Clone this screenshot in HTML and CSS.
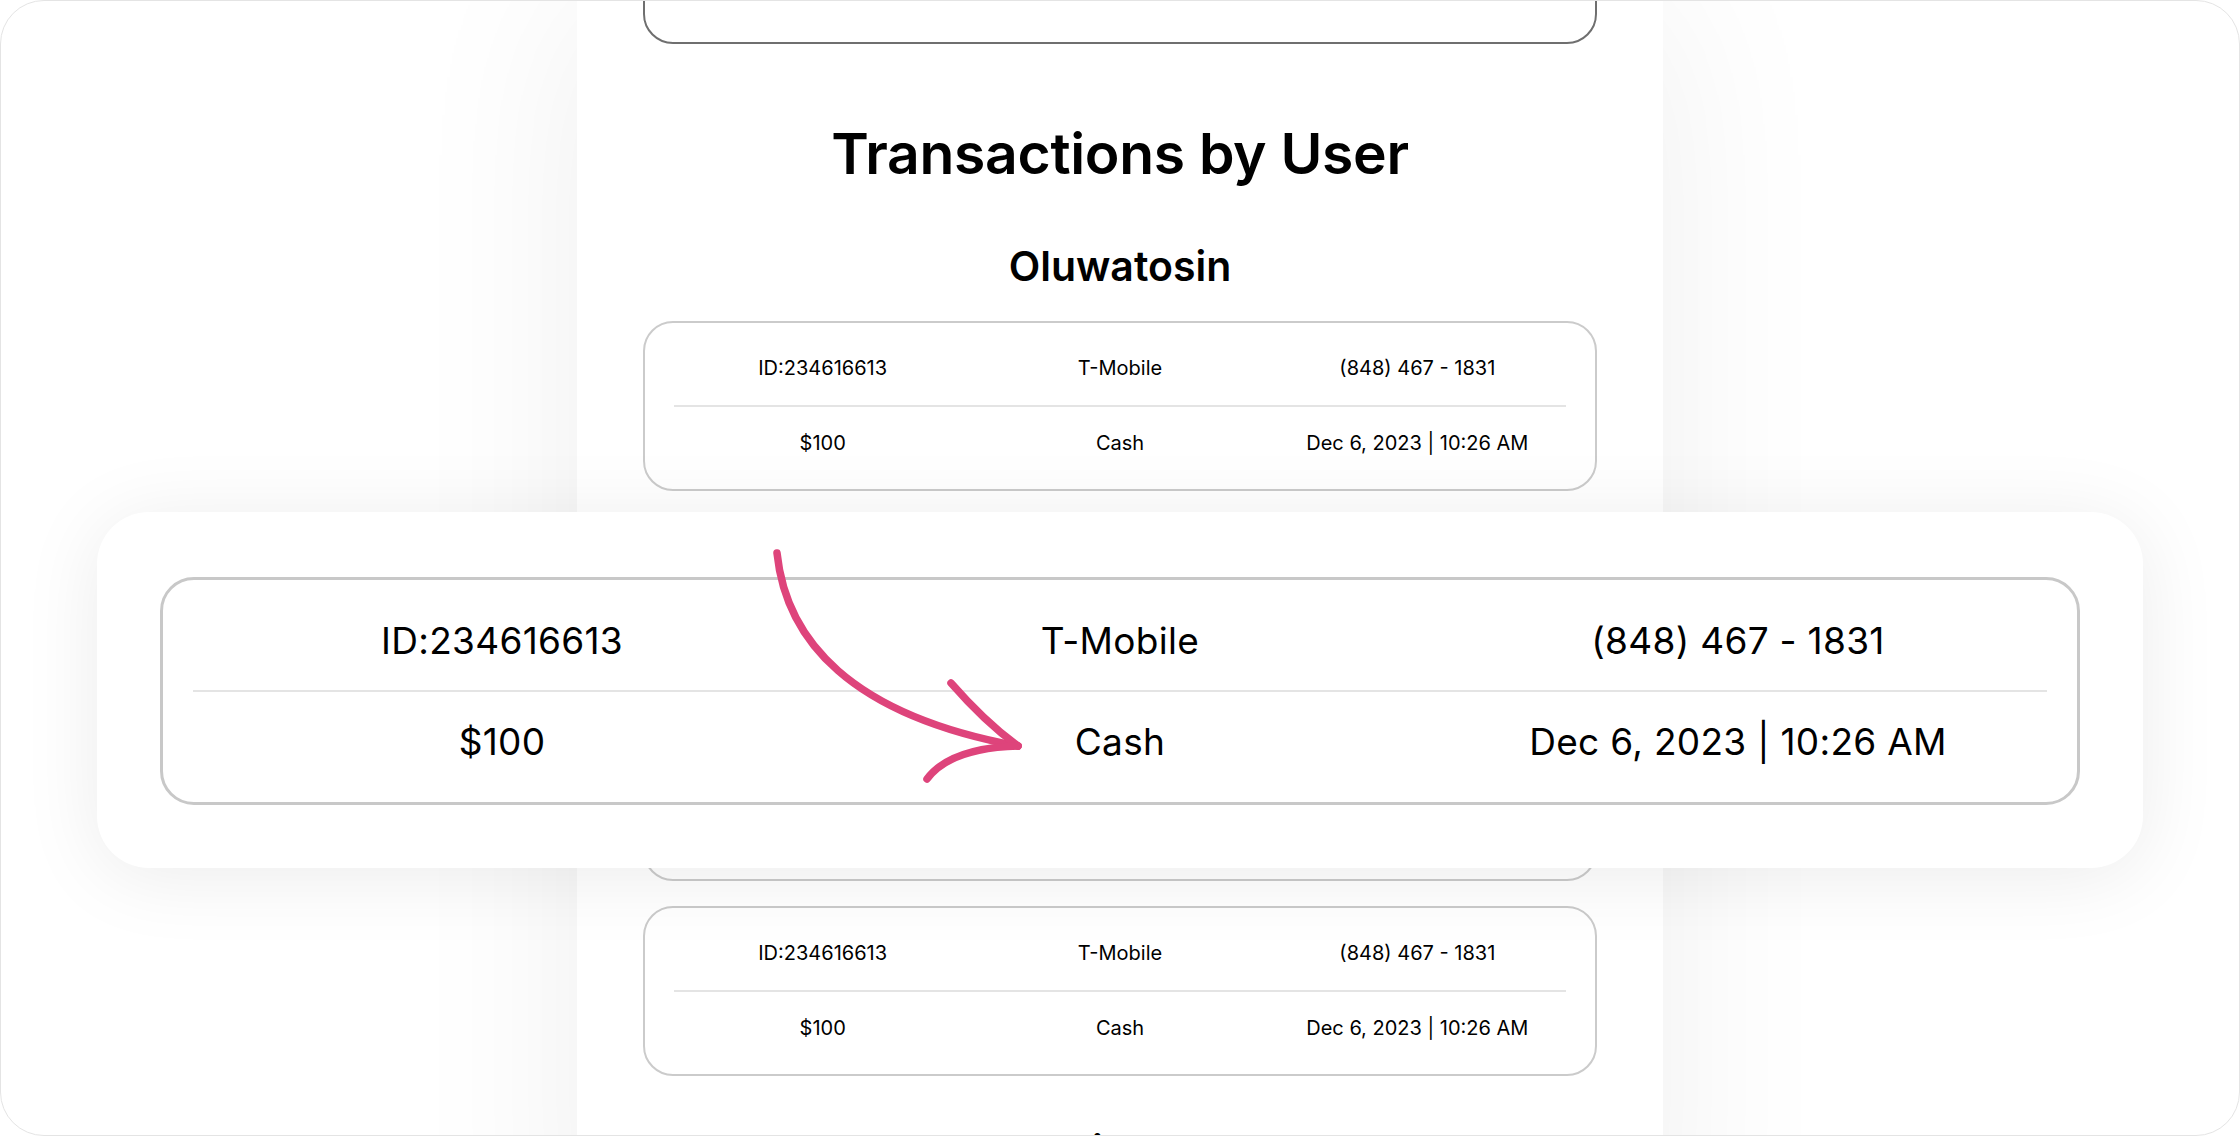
FILE: index.html
```html
<!DOCTYPE html>
<html lang="en">
<head>
<meta charset="utf-8">
<title>Transactions by User</title>
<link rel="stylesheet" href="styles.css">
</head>
<body>
<div class="frame">
  <div class="page">
    <div class="tx tx-dark"></div>
    <h1 class="title">Transactions by User</h1>

    <section class="group">
      <h2 class="user">Oluwatosin</h2>
      <div class="tx">
        <div class="row"><span>ID:234616613</span><span>T-Mobile</span><span>(848) 467 - 1831</span></div>
        <div class="row"><span>$100</span><span>Cash</span><span>Dec 6, 2023 | 10:26 AM</span></div>
      </div>
      <div class="tx">
        <div class="row"><span>ID:234616613</span><span>T-Mobile</span><span>(848) 467 - 1831</span></div>
        <div class="row"><span>$100</span><span>Cash</span><span>Dec 6, 2023 | 10:26 AM</span></div>
      </div>
      <div class="tx">
        <div class="row"><span>ID:234616613</span><span>T-Mobile</span><span>(848) 467 - 1831</span></div>
        <div class="row"><span>$100</span><span>Cash</span><span>Dec 6, 2023 | 10:26 AM</span></div>
      </div>
      <div class="tx">
        <div class="row"><span>ID:234616613</span><span>T-Mobile</span><span>(848) 467 - 1831</span></div>
        <div class="row"><span>$100</span><span>Cash</span><span>Dec 6, 2023 | 10:26 AM</span></div>
      </div>
    </section>

    <section class="group">
      <h2 class="user">Abiodun</h2>
    </section>
  </div>

  <div class="zoom-panel">
    <div class="tx tx-large">
      <div class="row"><span>ID:234616613</span><span>T-Mobile</span><span>(848) 467 - 1831</span></div>
      <div class="row"><span>$100</span><span>Cash</span><span>Dec 6, 2023 | 10:26 AM</span></div>
    </div>
  </div>

  <svg class="arrow" width="2240" height="1136" viewBox="0 0 2240 1136" aria-hidden="true">
    <path d="M777 553 C 786 640, 850 715, 1018 746" />
    <path d="M951 683 Q 985 722, 1018 746" />
    <path d="M1018 746 Q 950 748, 927 779" />
  </svg>
</div>
</body>
</html>
```

FILE: styles.css
```css
* { box-sizing: border-box; }

html, body {
  margin: 0;
  padding: 0;
  background: #ffffff;
}

body {
  font-family: "Inter", "Noto Sans", "Liberation Sans", sans-serif;
  color: #000;
}

.frame {
  position: relative;
  width: 2240px;
  height: 1136px;
  overflow: hidden;
  background: #ffffff;
  border: 1px solid #e4e4e4;
  border-radius: 44px;
}

.page {
  width: 1086px;
  min-height: 1300px;
  margin: 0 auto 0 576px;
  padding: 0 66px;
  background: #ffffff;
  box-shadow: 0 0 170px rgba(0, 0, 0, 0.065);
  display: flex;
  flex-direction: column;
}

.title {
  margin: 76px 0 0;
  font-size: 57px;
  line-height: 68px;
  font-weight: 600;
  text-align: center;
  letter-spacing: -0.3px;
}

.group {
  display: flex;
  flex-direction: column;
  gap: 25px;
  margin-top: 53px;
}

.group + .group {
  margin-top: 49px;
}

.user {
  margin: 0 0 5px;
  font-size: 41px;
  line-height: 50px;
  font-weight: 600;
  text-align: center;
}

.tx {
  border: 2px solid #cbcbcb;
  border-radius: 30px;
  padding: 8px 29px 10px;
  background: #fff;
  display: flex;
  flex-direction: column;
}

.tx-dark {
  height: 120px;
  margin-top: -77px;
  border-color: #6f6f6f;
}

.row {
  display: grid;
  grid-template-columns: repeat(3, 1fr);
  align-items: center;
  height: 74px;
  font-size: 20px;
  text-align: center;
}

.row + .row {
  border-top: 2px solid #e4e4e4;
}

.zoom-panel {
  position: absolute;
  left: 96px;
  top: 511px;
  width: 2046px;
  height: 356px;
  padding: 65px 63px 65px 63px;
  background: #ffffff;
  border-radius: 52px;
  box-shadow: 0 8px 80px rgba(0, 0, 0, 0.08);
}

.tx-large {
  border-width: 3px;
  border-color: #c8c8c8;
  border-radius: 34px;
  padding: 10px 30px 12px;
}

.tx-large .row {
  height: 100px;
  font-size: 37px;
  letter-spacing: 0.3px;
}

.arrow {
  position: absolute;
  left: -1px;
  top: -1px;
  fill: none;
  stroke: #de447b;
  stroke-width: 7.5;
  stroke-linecap: round;
  stroke-linejoin: round;
}
```
